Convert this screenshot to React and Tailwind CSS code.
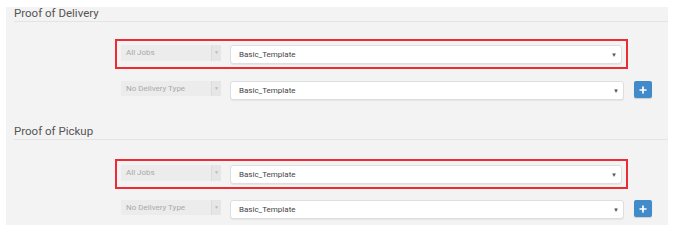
import { Plus } from "lucide-react";

const font = { fontFamily: "Roboto, 'Liberation Sans', sans-serif" };

export default function App() {
  return (
    <div className="h-[241px] w-[680px] bg-white pt-[7px]" style={font}>
      <div className="ml-[6px] w-[662px] bg-[#f3f3f3] pb-[6px]">
        <ProofSection title="Proof of Delivery" className="mb-[25px]" boxTop="mt-[17px]" rowTop="mt-[12px]" />
        <ProofSection title="Proof of Pickup" boxTop="mt-[19px]" rowTop="mt-[11px]" />
      </div>
    </div>
  );
}

function ProofSection({ title, className = "", boxTop, rowTop }) {
  return (
    <section className={className}>
      <h3 className="ml-[8px] h-[15px] border-b border-[#e4e4e4] pt-[1px] text-[11.5px] leading-[11px] text-[#555]">
        {title}
      </h3>

      <div className={`${boxTop} ml-[109px] flex h-[30px] w-[513px] items-start gap-[9px] border-2 border-[#ee2a35] px-[4px] pt-[4px]`}>
        <JobSelect label="All Jobs" h="h-[16px]" />
        <TemplateSelect />
      </div>

      <div className={`${rowTop} ml-[115px] flex items-start gap-[9px]`}>
        <JobSelect label="No Delivery Type" h="h-[15px]" />
        <TemplateSelect />
        <button
          type="button"
          className="ml-[1px] flex h-[17px] w-[18px] items-center justify-center rounded-[2px] bg-[#428bca] shadow-[0_1px_1px_rgba(0,0,0,0.15)]"
        >
          <Plus size={10} strokeWidth={4} color="#fff" />
        </button>
      </div>
    </section>
  );
}

function JobSelect({ label, h }) {
  return (
    <div className={`flex ${h} w-[100px] shrink-0 items-center bg-[#ececec] text-[8px] text-[#a9a9a9]`}>
      <span className="flex-1 pl-[5px]">{label}</span>
      <span className="flex h-full w-[10px] items-center justify-center border-l border-[#dcdcdc] bg-[#e6e6e6] text-[5px] text-[#bbb]">
        ▼
      </span>
    </div>
  );
}

function TemplateSelect() {
  return (
    <div className="flex h-[19px] w-[394px] items-center rounded-[3px] border border-[#dedede] bg-white shadow-[0_1px_1px_rgba(0,0,0,0.06)] pl-[8px] pr-[4px] text-[8px] text-[#444]">
      <span className="flex-1">Basic_Template</span>
      <span className="text-[6px] text-[#555]">▼</span>
    </div>
  );
}
